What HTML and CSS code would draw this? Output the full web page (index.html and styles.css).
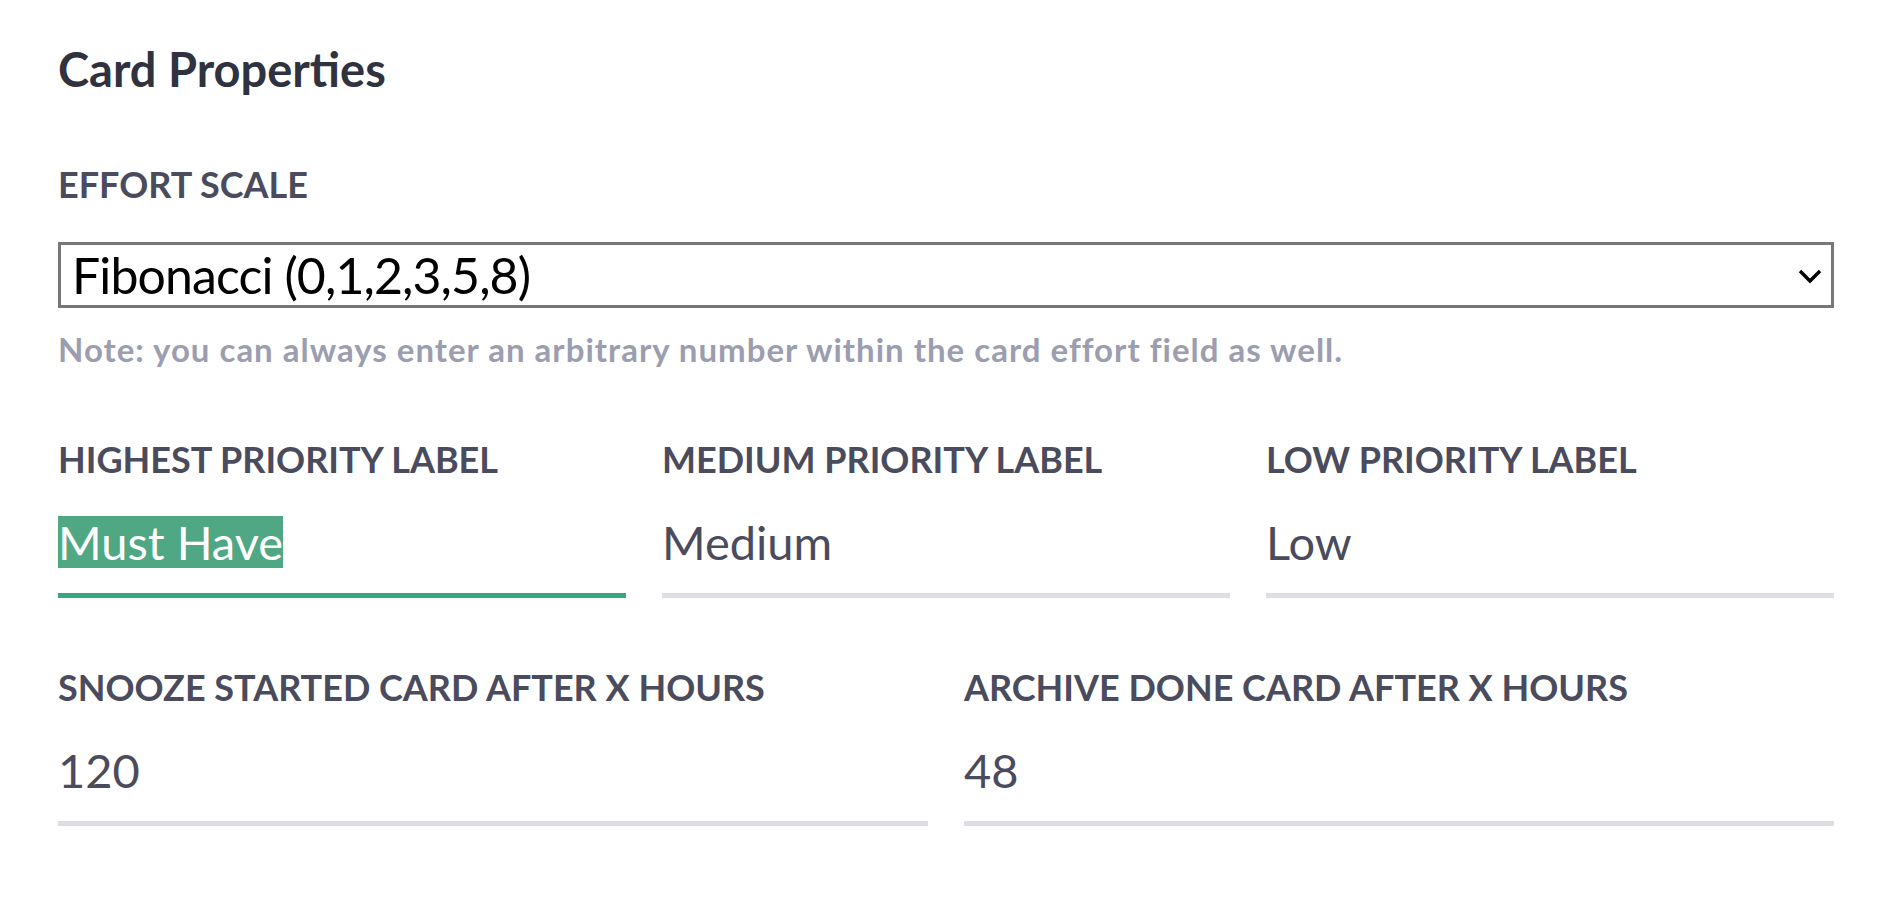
FILE: index.html
```html
<!DOCTYPE html>
<html lang="en">
<head>
    <meta charset="UTF-8">
    <meta name="viewport" content="width=device-width, initial-scale=1.0">
    <title>Card Properties</title>
    <link rel="stylesheet" href="styles.css">
</head>
<body>

<div class="settings">
    <h1>Card Properties</h1>

    <div class="field">
        <label class="field-label" for="effort">Effort scale</label>
        <div class="select-wrap">
            <select id="effort" class="select">
                <option>Fibonacci (0,1,2,3,5,8)</option>
                <option>Linear (1,2,3,4,5)</option>
                <option>T-shirt (S,M,L,XL)</option>
            </select>
            <svg class="select-arrow" width="28" height="16" viewBox="0 0 28 16">
                <path d="M4 3 L14 13 L24 3" fill="none" stroke="#000" stroke-width="3.4"/>
            </svg>
        </div>
        <p class="note">Note: you can always enter an arbitrary number within the card effort field as well.</p>
    </div>

    <div class="row row-3">
        <div class="field">
            <div class="field-label">Highest priority label</div>
            <div class="field-value active"><span class="selected">Must Have</span></div>
        </div>
        <div class="field">
            <div class="field-label">Medium priority label</div>
            <div class="field-value">Medium</div>
        </div>
        <div class="field">
            <div class="field-label">Low priority label</div>
            <div class="field-value">Low</div>
        </div>
    </div>

    <div class="row row-2">
        <div class="field">
            <div class="field-label">Snooze started card after X hours</div>
            <div class="field-value">120</div>
        </div>
        <div class="field">
            <div class="field-label">Archive done card after X hours</div>
            <div class="field-value">48</div>
        </div>
    </div>
</div>

</body>
</html>
```

FILE: styles.css
```css
body {
    margin: 0;
    background: #fff;
    font-family: Lato, "Open Sans", sans-serif;
}
.settings {
    padding: 41px 52px 0 58px;
}
h1 {
    margin: 0 0 65px;
    font-size: 47px;
    line-height: 56px;
    font-weight: 700;
    color: #31323f;
}
.field-label {
    display: block;
    margin-bottom: 36px;
    font-size: 36px;
    line-height: 44px;
    font-weight: 700;
    text-transform: uppercase;
    color: #4a4b5c;
}
.select-wrap {
    position: relative;
}
.select {
    display: block;
    width: 100%;
    height: 66px;
    margin-top: 1px;
    padding: 0 50px 0 11px;
    box-sizing: border-box;
    border: 3px solid #777;
    border-radius: 0;
    background: #fff;
    -webkit-appearance: none;
    appearance: none;
    font-family: Lato, sans-serif;
    font-size: 50px;
    letter-spacing: -0.9px;
    color: #000;
}
.select-arrow {
    position: absolute;
    right: 10px;
    top: 26px;
}
.note {
    margin: 22px 0 0;
    font-size: 33px;
    line-height: 38px;
    letter-spacing: 1px;
    font-weight: 700;
    color: #9b9db0;
}
.row {
    display: grid;
    column-gap: 36px;
}
.row-3 {
    grid-template-columns: repeat(3, 1fr);
    margin-top: 69px;
}
.row-2 {
    grid-template-columns: repeat(2, 1fr);
    margin-top: 67px;
}
.row .field-label {
    margin-bottom: 35px;
}
.field-value {
    padding-bottom: 25px;
    border-bottom: 5px solid #dcdee3;
    font-size: 47px;
    line-height: 52px;
    color: #4a4b5c;
}
.field-value.active {
    border-bottom-color: #35a67f;
}
.selected {
    display: inline-block;
    background: #4fa883;
    color: #fff;
}
```
